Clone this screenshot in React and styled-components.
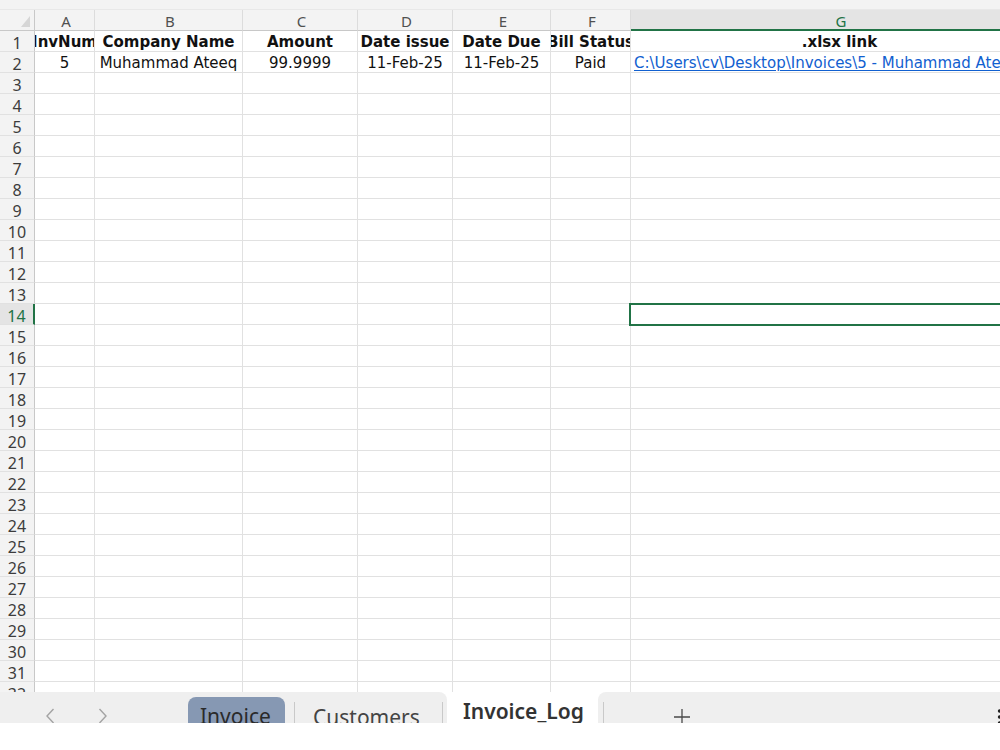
import React from "react";
import styled, { createGlobalStyle, css } from "styled-components";

const Global = createGlobalStyle`
  html, body { margin: 0; padding: 0; background: #fff; }
  body { font-family: "DejaVu Sans", "Liberation Sans", sans-serif; }
  #root { width: 1000px; height: 750px; }
`;

const COLS = [
  { key: "A", w: 60 },
  { key: "B", w: 148 },
  { key: "C", w: 115 },
  { key: "D", w: 95 },
  { key: "E", w: 98 },
  { key: "F", w: 80 },
  { key: "G", w: 418 },
];

const GREEN = "#217346";
const ACTIVE_COL = "G";
const ACTIVE_ROW = 14;
const ROW_COUNT = 32;

const HEADERS = ["InvNum", "Company Name", "Amount", "Date issue", "Date Due", "Bill Status", ".xlsx link"];
const DATA = [
  "5",
  "Muhammad Ateeq",
  "99.9999",
  "11-Feb-25",
  "11-Feb-25",
  "Paid",
  "C:\\Users\\cv\\Desktop\\Invoices\\5 - Muhammad Ateeq.xlsx",
];

const Page = styled.div`
  width: 1000px;
  height: 750px;
  overflow: hidden;
  display: flex;
  flex-direction: column;
  background: #fff;
`;

const TopStrip = styled.div`
  height: 10px;
  flex: none;
  background: #f3f3f3;
  border-bottom: 1px solid #e8e8e8;
  box-sizing: border-box;
`;

const Viewport = styled.div`
  height: 682px;
  flex: none;
  overflow: hidden;
`;

const Grid = styled.div`
  display: grid;
  grid-template-columns: 35px ${COLS.map((c) => c.w + "px").join(" ")};
  grid-auto-rows: 21px;
  width: 1049px;
`;

const Corner = styled.div`
  background: #f3f3f3;
  border-right: 1px solid #c8c8c8;
  border-bottom: 1px solid #c8c8c8;
  box-sizing: border-box;
  display: flex;
  align-items: flex-end;
  justify-content: flex-end;
  padding: 0 4px 3px 0;
`;

const ColHead = styled.div`
  box-sizing: border-box;
  background: ${(p) => (p.$active ? "#e4e4e4" : "#f3f3f3")};
  border-right: 1px solid #dcdcdc;
  border-bottom: ${(p) => (p.$active ? `2px solid ${GREEN}` : "1px solid #c8c8c8")};
  color: ${(p) => (p.$active ? GREEN : "#505050")};
  font-family: "Noto Sans", sans-serif;
  font-size: 15px;
  line-height: 15px;
  display: flex;
  align-items: center;
  justify-content: center;
  padding: 3px 0 0 3px;
`;

const RowHead = styled.div`
  box-sizing: border-box;
  background: ${(p) => (p.$active ? "#e4e4e4" : "#f3f3f3")};
  border-right: ${(p) => (p.$active ? `2px solid ${GREEN}` : "1px solid #c8c8c8")};
  border-bottom: 1px solid #e1e1e1;
  color: ${(p) => (p.$active ? GREEN : "#3c3c3c")};
  font-family: "Noto Sans", sans-serif;
  font-size: 16px;
  line-height: 16px;
  display: flex;
  align-items: center;
  justify-content: center;
  padding-top: 3px;
`;

const Cell = styled.div`
  box-sizing: border-box;
  border-right: 1px solid #e1e1e1;
  border-bottom: 1px solid #e1e1e1;
  display: flex;
  align-items: center;
  justify-content: ${(p) => (p.$align === "left" ? "flex-start" : "center")};
  padding: 3px 0 0 ${(p) => (p.$align === "left" ? "3px" : "0")};
  overflow: hidden;
  white-space: nowrap;
  font-size: 15px;
  line-height: 15px;
  color: #111;
  font-weight: ${(p) => (p.$bold ? 700 : 400)};
  ${(p) =>
    p.$selected &&
    css`
      position: relative;
      overflow: visible;
      &::after {
        content: "";
        position: absolute;
        top: -1px;
        left: -2px;
        right: -1px;
        bottom: -2px;
        border: 2px solid ${GREEN};
        z-index: 2;
      }
    `}
`;

const LinkText = styled.span`
  color: #1160d0;
  text-decoration: underline;
  text-underline-offset: 2px;
`;

const TabBar = styled.div`
  height: 31px;
  flex: none;
  display: flex;
  overflow: hidden;
  background: #fff;
  font-family: "Noto Sans", sans-serif;
`;

const Well = styled.div`
  display: flex;
  align-items: flex-start;
  background: #efefef;
  box-sizing: border-box;
  ${(p) =>
    p.$side === "left"
      ? css`
          width: 447px;
          flex: none;
          border-top-right-radius: 8px;
          padding-left: 45px;
        `
      : css`
          flex: 1;
          border-top-left-radius: 8px;
        `}
`;

const NavArrow = styled.svg`
  flex: none;
  margin-top: 16px;
  margin-left: ${(p) => p.$gap || 0}px;
`;

const SheetTab = styled.div`
  flex: none;
  margin-top: 5px;
  margin-left: 80px;
  width: 97px;
  height: 40px;
  box-sizing: border-box;
  border-radius: 8px 8px 0 0;
  background: #8698b3;
  padding: 9px 0 0 12px;
  font-size: 21px;
  line-height: 21px;
  color: #2a2a2a;
`;

const TabLabel = styled.div`
  flex: none;
  width: ${(p) => p.$w}px;
  margin-left: ${(p) => p.$gap}px;
  margin-top: 15px;
  font-size: 21px;
  line-height: 21px;
  color: #444;
  white-space: nowrap;
`;

const Divider = styled.div`
  flex: none;
  width: 1px;
  height: 30px;
  margin-top: 10px;
  margin-left: ${(p) => p.$gap}px;
  background: #c9c9c9;
`;

const ActiveTab = styled.div`
  flex: none;
  width: 151px;
  box-sizing: border-box;
  padding: 9px 0 0 16px;
  font-size: 21px;
  line-height: 21px;
  font-weight: 600;
  color: #333;
  white-space: nowrap;
`;

const IconBox = styled.svg`
  flex: none;
  margin-top: ${(p) => p.$top}px;
  margin-left: ${(p) => (p.$auto ? "auto" : `${p.$gap}px`)};
  margin-right: ${(p) => p.$right || 0}px;
`;

const Footer = styled.div`
  flex: 1;
  background: #fff;
`;

function Chevron({ dir, gap }) {
  const d = dir === "left" ? "M8.5 1 L2 8 L8.5 15" : "M1.5 1 L8 8 L1.5 15";
  return (
    <NavArrow width="10" height="16" viewBox="0 0 10 16" $gap={gap}>
      <path d={d} fill="none" stroke="#a3a3a3" strokeWidth="1.4" />
    </NavArrow>
  );
}

export default function App() {
  const rows = Array.from({ length: ROW_COUNT }, (_, i) => i + 1);
  return (
    <>
      <Global />
      <Page>
        <TopStrip />
        <Viewport>
          <Grid>
            <Corner>
              <svg width="9" height="11" viewBox="0 0 9 11">
                <polygon points="9,0 9,11 0,11" fill="#d6d6d6" />
              </svg>
            </Corner>
            {COLS.map((c) => (
              <ColHead key={c.key} $active={c.key === ACTIVE_COL}>
                {c.key}
              </ColHead>
            ))}
            {rows.map((r) => (
              <React.Fragment key={r}>
                <RowHead $active={r === ACTIVE_ROW}>{r}</RowHead>
                {COLS.map((c, ci) => {
                  const selected = r === ACTIVE_ROW && c.key === ACTIVE_COL;
                  if (r === 1) {
                    return (
                      <Cell key={c.key} $bold>
                        {HEADERS[ci]}
                      </Cell>
                    );
                  }
                  if (r === 2) {
                    const isLink = c.key === "G";
                    return (
                      <Cell key={c.key} $align={isLink ? "left" : "center"}>
                        {isLink ? <LinkText>{DATA[ci]}</LinkText> : DATA[ci]}
                      </Cell>
                    );
                  }
                  return <Cell key={c.key} $selected={selected} />;
                })}
              </React.Fragment>
            ))}
          </Grid>
        </Viewport>
        <TabBar>
          <Well $side="left">
            <Chevron dir="left" gap={0} />
            <Chevron dir="right" gap={43} />
            <SheetTab>Invoice</SheetTab>
            <Divider $gap={9} />
            <TabLabel $w={110} $gap={18}>
              Customers
            </TabLabel>
            <Divider $gap={19} />
          </Well>
          <ActiveTab>Invoice_Log</ActiveTab>
          <Well $side="right">
            <Divider $gap={5} />
            <IconBox width="18" height="18" viewBox="0 0 18 18" $top={16} $gap={69}>
              <path d="M9 1 V17 M1 9 H17" stroke="#4a4a4a" strokeWidth="1.3" fill="none" />
            </IconBox>
            <IconBox width="5" height="18" viewBox="0 0 5 18" $top={17} $auto $right={-2}>
              <circle cx="2.5" cy="2" r="1.7" fill="#222" />
              <circle cx="2.5" cy="8" r="1.7" fill="#222" />
              <circle cx="2.5" cy="14" r="1.7" fill="#222" />
            </IconBox>
          </Well>
        </TabBar>
        <Footer />
      </Page>
    </>
  );
}
